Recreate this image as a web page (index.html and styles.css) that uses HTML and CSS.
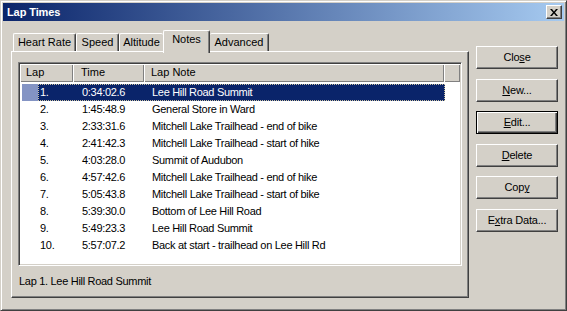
FILE: index.html
```html
<!DOCTYPE html>
<html>
<head>
  <title>Lap Times</title>
  <link rel="stylesheet" href="styles.css">
</head>
<body>
<div class="window">
  <div class="titlebar">
    <span class="title">Lap Times</span>
    <div class="xbtn">
      <svg width="8" height="7" viewBox="0 0 8 7"><path d="M0 0h2l2 2.5L6 0h2L5 3.5 8 7H6L4 4.5 2 7H0l3-3.5z" fill="#000"/></svg>
    </div>
  </div>

  <div class="content">
    <div class="tabarea">
      <div class="tabs">
        <div class="tab tab-hr">Heart Rate</div>
        <div class="tab tab-speed">Speed</div>
        <div class="tab tab-alt">Altitude</div>
        <div class="tab tab-notes active">Notes</div>
        <div class="tab tab-adv">Advanced</div>
      </div>

      <div class="panel">
        <div class="list">
          <div class="header">
            <div class="hcell col-lap">Lap</div>
            <div class="hcell col-time">Time</div>
            <div class="hcell col-note">Lap Note</div>
            <div class="hcell col-fill"></div>
          </div>
          <div class="rows">
            <div class="row selected">
              <div class="state"></div>
              <div class="cells">
                <div class="cell c-lap">1.</div>
                <div class="cell c-time">0:34:02.6</div>
                <div class="cell c-note">Lee Hill Road Summit</div>
              </div>
            </div>
            <div class="row">
              <div class="state"></div>
              <div class="cells">
                <div class="cell c-lap">2.</div>
                <div class="cell c-time">1:45:48.9</div>
                <div class="cell c-note">General Store in Ward</div>
              </div>
            </div>
            <div class="row">
              <div class="state"></div>
              <div class="cells">
                <div class="cell c-lap">3.</div>
                <div class="cell c-time">2:33:31.6</div>
                <div class="cell c-note">Mitchell Lake Trailhead - end of bike</div>
              </div>
            </div>
            <div class="row">
              <div class="state"></div>
              <div class="cells">
                <div class="cell c-lap">4.</div>
                <div class="cell c-time">2:41:42.3</div>
                <div class="cell c-note">Mitchell Lake Trailhead - start of hike</div>
              </div>
            </div>
            <div class="row">
              <div class="state"></div>
              <div class="cells">
                <div class="cell c-lap">5.</div>
                <div class="cell c-time">4:03:28.0</div>
                <div class="cell c-note">Summit of Audubon</div>
              </div>
            </div>
            <div class="row">
              <div class="state"></div>
              <div class="cells">
                <div class="cell c-lap">6.</div>
                <div class="cell c-time">4:57:42.6</div>
                <div class="cell c-note">Mitchell Lake Trailhead - end of hike</div>
              </div>
            </div>
            <div class="row">
              <div class="state"></div>
              <div class="cells">
                <div class="cell c-lap">7.</div>
                <div class="cell c-time">5:05:43.8</div>
                <div class="cell c-note">Mitchell Lake Trailhead - start of bike</div>
              </div>
            </div>
            <div class="row">
              <div class="state"></div>
              <div class="cells">
                <div class="cell c-lap">8.</div>
                <div class="cell c-time">5:39:30.0</div>
                <div class="cell c-note">Bottom of Lee Hill Road</div>
              </div>
            </div>
            <div class="row">
              <div class="state"></div>
              <div class="cells">
                <div class="cell c-lap">9.</div>
                <div class="cell c-time">5:49:23.3</div>
                <div class="cell c-note">Lee Hill Road Summit</div>
              </div>
            </div>
            <div class="row">
              <div class="state"></div>
              <div class="cells">
                <div class="cell c-lap">10.</div>
                <div class="cell c-time">5:57:07.2</div>
                <div class="cell c-note">Back at start - trailhead on Lee Hill Rd</div>
              </div>
            </div>
          </div>
        </div>
        <div class="status">Lap 1. Lee Hill Road Summit</div>
      </div>
    </div>

    <div class="buttons">
      <div class="btn">Clo<u>s</u>e</div>
      <div class="btn"><u>N</u>ew...</div>
      <div class="btn default"><u>E</u>dit...</div>
      <div class="btn"><u>D</u>elete</div>
      <div class="btn">Cop<u>y</u></div>
      <div class="btn">E<u>x</u>tra Data...</div>
    </div>
  </div>
</div>
</body>
</html>
```

FILE: styles.css
```css
body {
  margin: 0;
  background: #d4d0c8;
  font-family: "Liberation Sans", Arial, sans-serif;
  font-size: 11px;
  color: #000;
}

.window {
  box-sizing: border-box;
  width: 567px;
  height: 311px;
  background: #d4d0c8;
  border: 1px solid;
  border-color: #d4d0c8 #404040 #404040 #d4d0c8;
  padding: 2px;
  box-shadow: inset 1px 1px #fff, inset -1px -1px #808080;
}

/* title bar */
.titlebar {
  height: 18px;
  display: flex;
  align-items: center;
  justify-content: space-between;
  background: linear-gradient(to right, #0a246a, #a6caf0);
}
.title {
  color: #fff;
  font-weight: bold;
  padding-left: 4px;
  letter-spacing: -0.1px;
}
.xbtn {
  box-sizing: border-box;
  width: 16px;
  height: 14px;
  margin-right: 2px;
  display: flex;
  align-items: center;
  justify-content: center;
  background: #d4d0c8;
  border: 1px solid;
  border-color: #fff #404040 #404040 #fff;
  box-shadow: inset -1px -1px #808080;
}

.content {
  display: flex;
}

/* tabs */
.tabarea {
  margin-left: 8px;
  margin-top: 9px;
  width: 458px;
}
.tabs {
  display: flex;
  align-items: flex-end;
  height: 21px;
  padding-left: 2px;
  position: relative;
  z-index: 1;
}
.tab {
  box-sizing: border-box;
  height: 18px;
  text-align: center;
  line-height: 16px;
  background: #d4d0c8;
  border-top: 1px solid #fff;
  border-left: 1px solid #fff;
  border-right: 1px solid #404040;
  border-radius: 2px 2px 0 0;
  box-shadow: inset -1px 0 #808080;
}
.tab-hr { width: 63px; }
.tab-speed { width: 43px; }
.tab-alt { width: 44px; border-right: none; box-shadow: none; }
.tab-notes { width: 47px; }
.tab-adv { width: 59px; border-left: none; }
.tab.active {
  height: 23px;
  margin-bottom: -2px;
  padding-bottom: 4px;
  line-height: 16px;
}

.panel {
  box-sizing: border-box;
  height: 247px;
  border: 1px solid;
  border-color: #fff #404040 #404040 #fff;
  box-shadow: inset -1px -1px #808080;
  padding: 10px 0 0 6px;
}

/* list view */
.list {
  box-sizing: border-box;
  width: 444px;
  height: 204px;
  background: #fff;
  border: 1px solid;
  border-color: #808080 #fff #fff #808080;
  padding: 1px;
  box-shadow: inset 1px 1px #404040, inset -1px -1px #d4d0c8;
  overflow: hidden;
}
.header {
  display: flex;
  height: 18px;
}
.hcell {
  box-sizing: border-box;
  height: 18px;
  line-height: 17px;
  padding-left: 6px;
  background: #d4d0c8;
  box-shadow: inset 1px 1px #fff, inset -1px -1px #808080;
}
.col-lap { width: 53px; }
.col-time { width: 71px; padding-left: 8px; }
.col-note { width: 300px; padding-left: 7px; }
.col-fill { flex: 1; }

.rows {
  padding-top: 2px;
}
.row {
  display: flex;
  height: 17px;
}
.state {
  width: 16px;
  margin-left: 2px;
}
.cells {
  box-sizing: border-box;
  display: flex;
  width: 407px;
  line-height: 17px;
}
.cell {
  box-sizing: border-box;
  white-space: nowrap;
  letter-spacing: -0.3px;
}
.c-lap { width: 35px; padding-left: 2px; }
.c-time { width: 71px; padding-left: 9px; }
.c-note { width: 299px; padding-left: 8px; }

.row.selected .state {
  background: #8494c4;
}
.row.selected .cells {
  background: #0a246a;
  color: #fff;
  outline: 1px dotted #c8c0a0;
  outline-offset: -1px;
}

.status {
  margin-top: 8px;
  padding-left: 1px;
  line-height: 14px;
  letter-spacing: -0.3px;
}

/* buttons */
.buttons {
  margin-left: 7px;
  margin-top: 25px;
  display: flex;
  flex-direction: column;
  gap: 9.6px;
}
.btn {
  box-sizing: border-box;
  width: 82px;
  height: 23px;
  line-height: 20px;
  text-align: center;
  background: #d4d0c8;
  border: 1px solid;
  border-color: #fff #404040 #404040 #fff;
  box-shadow: inset -1px -1px #808080;
  letter-spacing: -0.2px;
}
.btn.default {
  border: 1px solid #000;
  box-shadow: inset 1px 1px #fff, inset -1px -1px #404040, inset -2px -2px #808080;
}
```
